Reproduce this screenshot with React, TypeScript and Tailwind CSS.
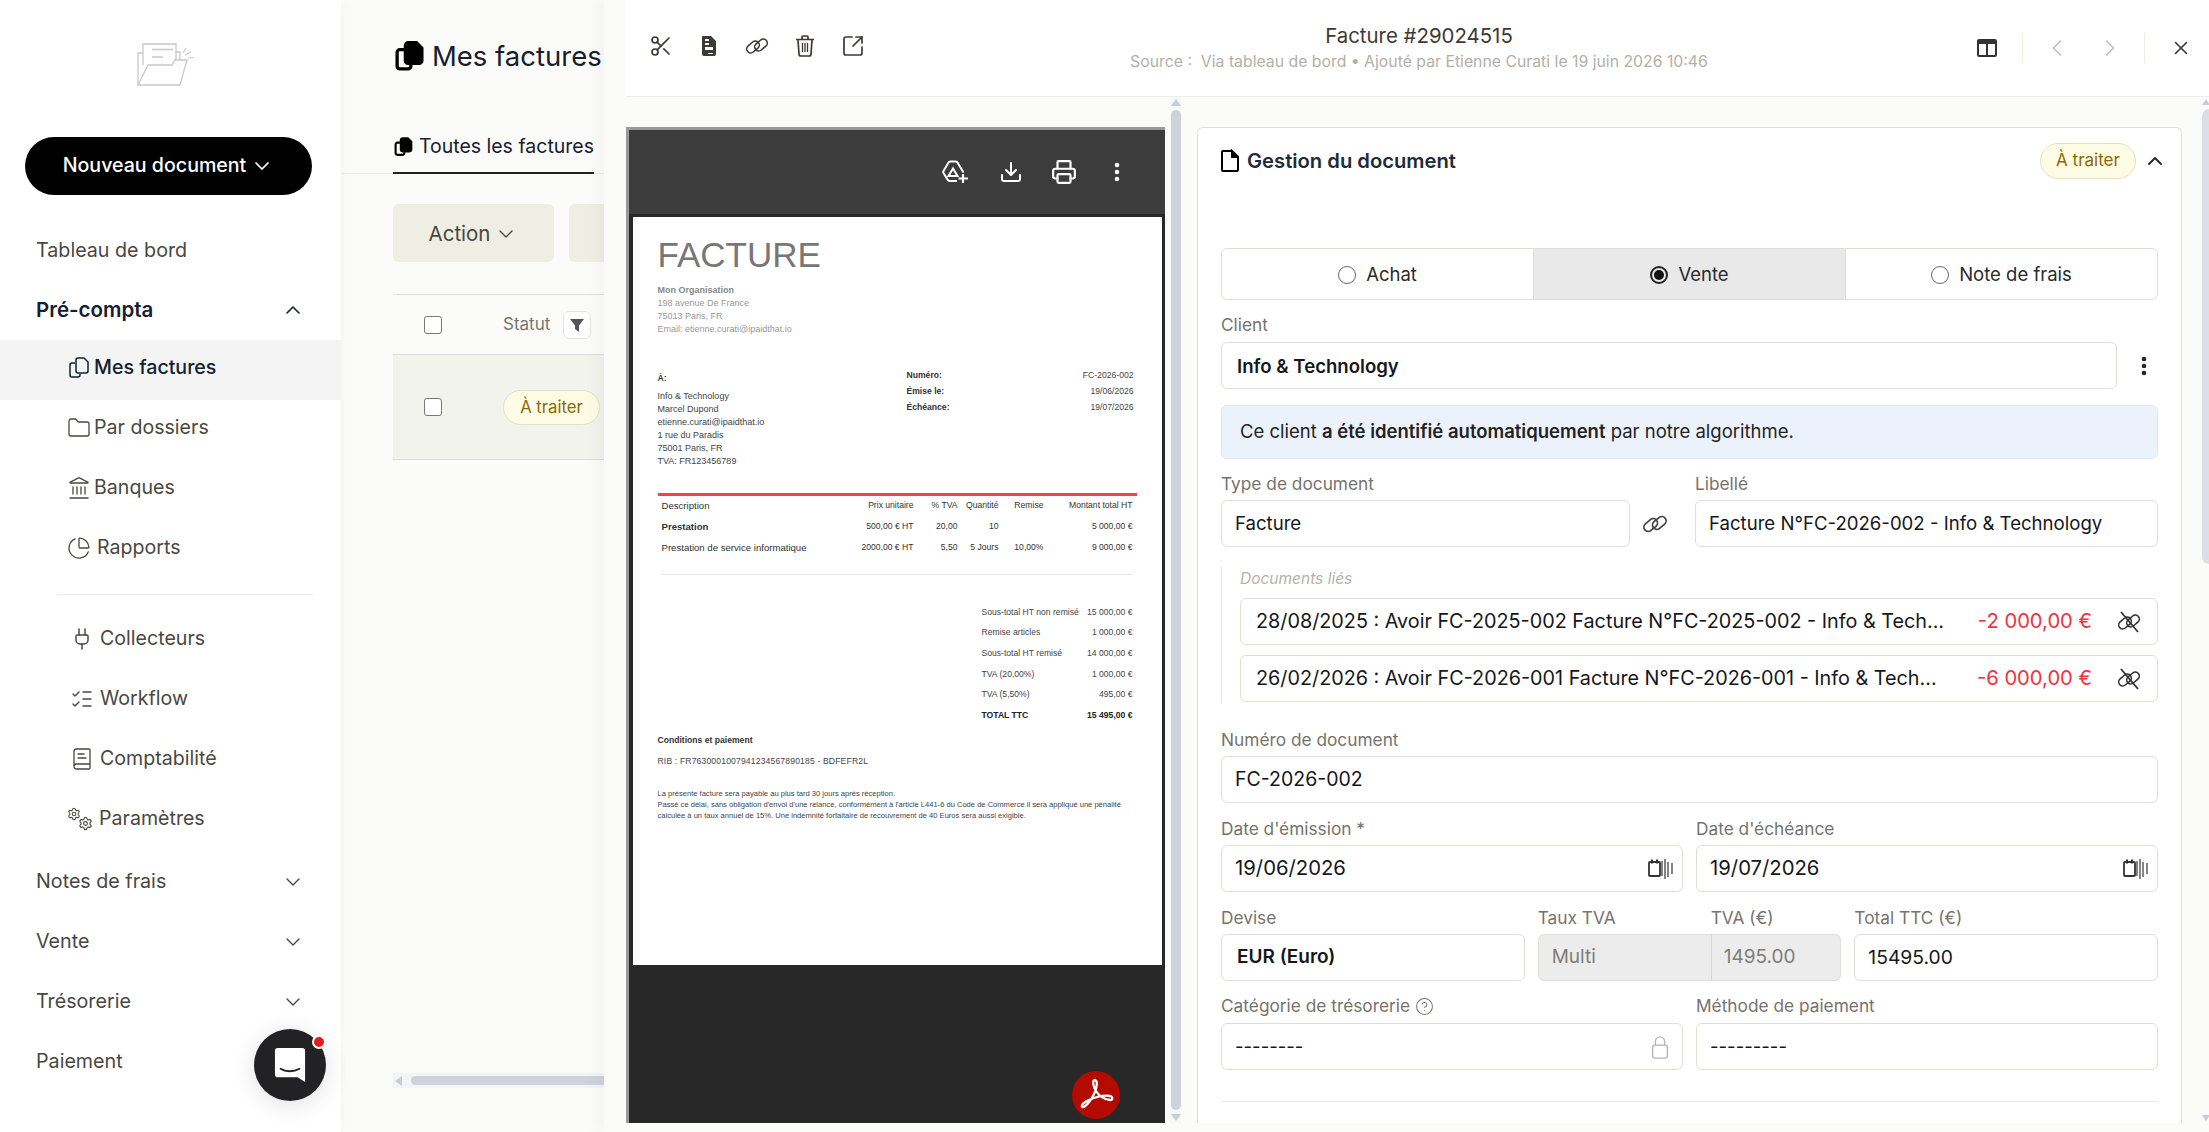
import React from "react";
import {
  BookText,
  ChartPie,
  ChevronDown,
  ChevronLeft,
  ChevronRight,
  ChevronUp,
  CircleHelp,
  Download,
  EllipsisVertical,
  Folder,
  Landmark,
  ListChecks,
  Plug,
  Printer,
  Scissors,
  Settings,
  SquareArrowOutUpRight,
  X,
} from "lucide-react";

function CopyIcon({ solid = false, className = "" }: { solid?: boolean; className?: string }) {
  return (
    <svg viewBox="0 0 24 24" fill="none" stroke="currentColor" strokeWidth={solid ? 2.4 : 1.5} className={className}>
      <path d="M8 7H5a2 2 0 0 0-2 2v10a2 2 0 0 0 2 2h6a2 2 0 0 0 2-2v-1" />
      <path
        d="M11 2h6l4 4v9a2 2 0 0 1-2 2h-8a2 2 0 0 1-2-2V4a2 2 0 0 1 2-2z"
        fill={solid ? "currentColor" : "none"}
      />
    </svg>
  );
}

function ChainIcon({ slash = false, className = "" }: { slash?: boolean; className?: string }) {
  return (
    <svg viewBox="0 0 26 26" fill="none" stroke="currentColor" strokeWidth="1.6" className={className}>
      <rect x="2" y="10" width="14" height="8" rx="4" transform="rotate(-40 9 14)" />
      <rect x="10" y="8" width="14" height="8" rx="4" transform="rotate(-40 17 12)" />
      {slash ? <path d="M5 3l17 20" strokeWidth="1.8" /> : null}
    </svg>
  );
}

function TrashIcon({ className = "" }: { className?: string }) {
  return (
    <svg viewBox="0 0 24 24" fill="none" stroke="currentColor" strokeWidth="1.7" className={className}>
      <path d="M3 5.500h18M9 5V3a1 1 0 0 1 1-1h4a1 1 0 0 1 1 1v2" />
      <path d="M5 6l1 14a2 2 0 0 0 2 2h8a2 2 0 0 0 2-2l1-14" />
      <path d="M9.500 9v9M12 9v9M14.500 9v9" strokeWidth="1.3" />
    </svg>
  );
}

function Logo() {
  return (
    <svg viewBox="0 0 90 70" fill="none" stroke="#c8c8c8" strokeWidth="1.3" className="h-[70px] w-[90px]">
      <path d="M18 55V23h5" />
      <path d="M23 35V14h33v16" />
      <path d="M32 19.500h21M32 27h11" />
      <path d="M18 55l10-20h24l3-5h12l-7 25z" fill="white" />
      <path d="M56 22h4v8" />
      <path d="M63 23l3-5M65 25l6-3M68 28l6-.5" strokeWidth="1.1" />
    </svg>
  );
}

function NavRow({ label, open, bold }: { label: string; open?: boolean; bold?: boolean }) {
  return (
    <div className={`flex h-[60px] items-center justify-between pl-9 pr-[36px] ${bold ? "text-[20.500px] font-semibold text-[#15202e]" : "pt-[2px] text-[19.700px] text-[#4a4741]"}`}>
      <span>{label}</span>
      {open === undefined ? null : open ? (
        <ChevronUp className="h-6 w-6" strokeWidth={1.6} />
      ) : (
        <ChevronDown className="h-6 w-6" strokeWidth={1.4} />
      )}
    </div>
  );
}

function SubRow({ icon, label, active, wide }: { icon: React.ReactNode; label: string; active?: boolean; wide?: boolean }) {
  return (
    <div
      className={`flex h-[60px] items-center text-[19.600px] ${wide ? "pl-[70px] gap-[6px] pt-[2px]" : "pl-[67px] gap-[3px] pb-[4px]"} ${
        active ? "bg-[#f4f4f4] text-[#15202e] font-medium" : "text-[#4a4741]"
      }`}
    >
      {icon}
      <span>{label}</span>
    </div>
  );
}

function Sidebar() {
  const ic = "h-[24px] w-[24px] shrink-0";
  return (
    <aside className="relative z-10 w-[341px] shrink-0 bg-white shadow-[2px_0_12px_rgba(0,0,0,0.03)]">
      <div className="h-[137px] pl-[120px] pt-[30px]">
        <Logo />
      </div>
      <div className="ml-[25px] flex h-[58px] w-[287px] items-center justify-center gap-1 rounded-full bg-black text-[19.600px] font-medium text-white">
        Nouveau document
        <ChevronDown className="h-6 w-6" strokeWidth={1.7} />
      </div>
      <div className="mt-[25px]">
        <NavRow label="Tableau de bord" />
        <NavRow label="Pré-compta" open bold />
        <SubRow active icon={<CopyIcon className={ic} />} label="Mes factures" />
        <SubRow icon={<Folder className={ic} strokeWidth={1.3} />} label="Par dossiers" />
        <SubRow icon={<Landmark className={ic} strokeWidth={1.3} />} label="Banques" />
        <SubRow icon={<ChartPie className={`${ic} mr-[3px]`} strokeWidth={1.3} />} label="Rapports" />
        <div className="ml-[57px] mr-[28px] mt-[14px] mb-[13px] h-px bg-[#ececec]" />
        <SubRow wide icon={<Plug className={ic} strokeWidth={1.5} />} label="Collecteurs" />
        <SubRow wide icon={<ListChecks className={ic} strokeWidth={1.4} />} label="Workflow" />
        <SubRow wide icon={<BookText className={ic} strokeWidth={1.3} />} label="Comptabilité" />
        <SubRow
          wide
          icon={
            <span className="relative -ml-[3px] block h-[24px] w-[26px]">
              <Settings className="absolute left-0 top-0 h-[14px] w-[14px]" strokeWidth={1.8} />
              <Settings className="absolute bottom-0 right-0 h-[15px] w-[15px]" strokeWidth={1.8} />
            </span>
          }
          label="Paramètres"
        />
        <div className="h-[3px]" />
        <NavRow label="Notes de frais" open={false} />
        <NavRow label="Vente" open={false} />
        <NavRow label="Trésorerie" open={false} />
        <NavRow label="Paiement" />
      </div>
    </aside>
  );
}

function ListPage() {
  return (
    <main className="flex-1 bg-[#fbfbf9] pt-[36px] pl-[52px]">
      <div className="flex items-center gap-[6px] whitespace-nowrap text-[27.500px] text-[#15202e]">
        <CopyIcon solid className="h-[33px] w-[33px] text-black" />
        Mes factures
      </div>
      <div className="mt-[46px] border-b border-[#ecece4] -ml-[52px] pl-[52px]">
        <div className="-mb-px flex h-[51px] w-[201px] items-center gap-[5px] border-b-2 border-[#222] pb-[2px] text-[19.500px] text-[#15202e]">
          <CopyIcon solid className="h-[22px] w-[22px] text-black" />
          <span className="whitespace-nowrap">Toutes les factures</span>
        </div>
      </div>
      <div className="mt-[30px] flex gap-[15px]">
        <div className="flex h-[58px] w-[161px] items-center justify-center gap-[4px] rounded-md bg-[#eeeee4] pt-[2px] text-[20.500px] text-[#4a4741]">
          Action
          <ChevronDown className="h-6 w-6" strokeWidth={1.4} />
        </div>
        <div className="h-[58px] w-[161px] rounded-md bg-[#eeeee4]" />
      </div>
      <div className="mt-[32px] flex h-[61px] items-center border-y border-[#dfdfda]">
        <span className="ml-[31px] h-[18px] w-[18px] rounded-[3px] border border-[#777] bg-white" />
        <span className="ml-[61px] text-[17px] text-[#78756e]">Statut</span>
        <span className="ml-[13px] flex h-[28px] w-[28px] items-center justify-center rounded-md border border-[#e5e5e0] bg-white">
          <svg viewBox="0 0 16 16" className="h-[16px] w-[16px] fill-[#555]">
            <path d="M1 2h14L10 8.500V15l-4-3V8.500z" />
          </svg>
        </span>
      </div>
      <div className="flex h-[105px] items-center border-b border-[#dfdfda] bg-[#f3f3ee]">
        <span className="ml-[31px] h-[18px] w-[18px] rounded-[3px] border border-[#777] bg-white" />
        <span className="ml-[61px] flex h-[35px] w-[97px] shrink-0 items-center justify-center rounded-full border border-[#e3e1c4] bg-[#fdfbe3] text-[16.700px] text-[#8a6a08]">
          À traiter
        </span>
      </div>
      <div className="mt-[613px] flex h-[15px] items-center bg-[#f3f4f6]">
        <span className="ml-[2px] h-0 w-0 border-y-[5px] border-r-[7px] border-y-transparent border-r-[#c8ccd4]" />
        <span className="ml-[9px] h-[9px] flex-1 rounded-full bg-[#cfd2da]" />
      </div>
    </main>
  );
}

function DriveAddIcon() {
  return (
    <svg viewBox="0 0 27 24" fill="none" stroke="white" strokeWidth="2" className="mr-[2px] h-[24px] w-[27px] shrink-0">
      <path d="M15 21H7.500a2 2 0 0 1-1.700-1L1.500 13a2 2 0 0 1 0-2L6.500 2.500A2 2 0 0 1 8.200 1.500h5.600a2 2 0 0 1 1.700 1l6 10" />
      <path d="M11 8.500l-4.500 7.500h9z" />
      <path d="M21 14v9M16.500 18.500h9.500" strokeWidth="2.200" />
    </svg>
  );
}

function AcrobatIcon() {
  return (
    <svg viewBox="0 0 48 48" fill="none" stroke="white" strokeWidth="2.300" className="h-[48px] w-[48px]">
      <path d="M10 36C13 37 19 30 23 21C25 15 26 10 23 9C20 9 21 15 24 20C27 25 33 29 38 29C41 29 41 26 38 25C32 24 24 26 17 29C13 31 9 33 10 36Z" />
    </svg>
  );
}

function LineRow({ desc, bold, price, tva, qty, rem, total }: { desc: string; bold?: boolean; price: string; tva: string; qty: string; rem: string; total: string }) {
  return (
    <div className="grid grid-cols-[4px_192px_60px_44px_41px_45px_89px] items-center whitespace-nowrap text-[8.600px] text-[#333]">
      <span />
      <span className={bold ? "font-bold text-[9.600px]" : "text-[9.600px]"}>{desc}</span>
      <span className="text-right">{price}</span>
      <span className="text-right">{tva}</span>
      <span className="text-right">{qty}</span>
      <span className="text-right">{rem}</span>
      <span className="text-right">{total}</span>
    </div>
  );
}

function TotalRow({ label, value, bold }: { label: string; value: string; bold?: boolean }) {
  return (
    <div className={`flex h-[20.600px] items-center justify-between ${bold ? "font-bold text-[#222]" : "text-[#444]"}`}>
      <span>{label}</span>
      <span>{value}</span>
    </div>
  );
}

function PdfPage() {
  return (
    <div className="mx-auto h-[748px] w-[529px] bg-white pl-[25px] pt-[17px] text-[8.600px] leading-[13px] text-[#444] [font-family:'Liberation_Sans',Arial,sans-serif]">
      <div className="text-[35px] leading-[42px] text-[#777]">FACTURE</div>
      <div className="mt-[8px] text-[9px] text-[#999]">
        <div className="font-bold text-[#888]">Mon Organisation</div>
        <div>198 avenue De France</div>
        <div>75013 Paris, FR</div>
        <div>Email: etienne.curati@ipaidthat.io</div>
      </div>
      <div className="mt-[36px] flex h-[101px]">
        <div className="w-[249px]">
          <div className="font-bold text-[#333]">À:</div>
          <div className="mt-[5px] text-[9px]">Info &amp; Technology</div>
          <div className="text-[9px]">Marcel Dupond</div>
          <div className="text-[9px]">etienne.curati@ipaidthat.io</div>
          <div className="text-[9px]">1 rue du Paradis</div>
          <div className="text-[9px]">75001 Paris, FR</div>
          <div className="text-[9px]">TVA: FR123456789</div>
        </div>
        <div className="-mt-[3px] flex w-[227px] flex-col gap-[3px]">
          <div className="flex justify-between"><b className="text-[#333]">Numéro:</b><span>FC-2026-002</span></div>
          <div className="flex justify-between"><b className="text-[#333]">Émise le:</b><span>19/06/2026</span></div>
          <div className="flex justify-between"><b className="text-[#333]">Échéance:</b><span>19/07/2026</span></div>
        </div>
      </div>
      <div className="mt-[20px] h-[3px] w-[479px] bg-[#ef4444]" />
      <div className="mt-[3px] flex w-[475px] flex-col gap-[8px]">
        <LineRow desc="Description" price="Prix unitaire" tva="% TVA" qty="Quantité" rem="Remise" total="Montant total HT" />
        <LineRow desc="Prestation" bold price="500,00 € HT" tva="20,00" qty="10" rem="" total="5 000,00 €" />
        <LineRow desc="Prestation de service informatique" price="2000,00 € HT" tva="5,50" qty="5 Jours" rem="10,00%" total="9 000,00 €" />
      </div>
      <div className="ml-[3px] mt-[20px] h-px w-[472px] bg-[#e8e8e8]" />
      <div className="ml-[324px] mt-[27px] w-[151px]">
        <TotalRow label="Sous-total HT non remisé" value="15 000,00 €" />
        <TotalRow label="Remise articles" value="1 000,00 €" />
        <TotalRow label="Sous-total HT remisé" value="14 000,00 €" />
        <TotalRow label="TVA (20,00%)" value="1 000,00 €" />
        <TotalRow label="TVA (5,50%)" value="495,00 €" />
        <TotalRow label="TOTAL TTC" value="15 495,00 €" bold />
      </div>
      <div className="mt-[8px] font-bold text-[#333]">Conditions et paiement</div>
      <div className="mt-[8px] tracking-[0.15px]">RIB : FR7630001007941234567890185 - BDFEFR2L</div>
      <div className="mt-[20px] whitespace-nowrap text-[7.570px] leading-[11px] text-[#444]">
        <div>La présente facture sera payable au plus tard 30 jours après réception.</div>
        <div>
          Passé ce délai, sans obligation d'envoi d'une relance, conformément à l'article L441-6 du Code de Commerce il sera appliqué une pénalité
        </div>
        <div>calculée à un taux annuel de 15%. Une indemnité forfaitaire de recouvrement de 40 Euros sera aussi exigible.</div>
      </div>
    </div>
  );
}

function PdfViewer() {
  return (
    <div className="relative w-[539px] shrink-0 overflow-hidden border-t-[3px] border-l-[3px] border-[#999] bg-[#282828]">
      <div className="flex h-[84px] items-center justify-end gap-[28px] bg-[#3c3c3c] pr-[36px] text-white">
        <DriveAddIcon />
        <Download className="h-[24px] w-[24px]" strokeWidth={2} />
        <Printer className="h-[26px] w-[26px]" strokeWidth={2} />
        <EllipsisVertical className="h-[24px] w-[24px]" strokeWidth={2.6} />
      </div>
      <div className="pt-[3px]">
        <PdfPage />
      </div>
      <div className="absolute bottom-[4px] right-[45px] h-[48px] w-[48px] rounded-full bg-[#b30b00]">
        <AcrobatIcon />
      </div>
    </div>
  );
}

function Label({ children }: { children: React.ReactNode }) {
  return <div className="flex h-[24px] items-center whitespace-nowrap text-[17.300px] text-[#76736c]">{children}</div>;
}

function Box({ children, className = "pl-[13px] text-[18.600px]" }: { children: React.ReactNode; className?: string }) {
  return (
    <div className={`mt-[4px] flex h-[47px] items-center rounded-md border border-[#dfdfd6] bg-white pr-[13px] text-[#15171a] ${className}`}>
      {children}
    </div>
  );
}

function CalendarIcon() {
  return (
    <svg viewBox="0 0 26 22" fill="none" stroke="#333" className="ml-auto -mr-[5px] h-[22px] w-[26px]">
      <rect x="1" y="4" width="11" height="14" rx="1" strokeWidth="1.800" />
      <path d="M4 1.500v4M9 1.500v4" strokeWidth="2" />
      <path d="M14 3v15M17 1v20M20 4v15M24 5v11" stroke="#777" strokeWidth="1.800" />
    </svg>
  );
}

function Radio({ label, checked }: { label: string; checked?: boolean }) {
  return (
    <div className={`flex flex-1 items-center justify-center gap-[10px] pt-[2px] text-[18.500px] text-[#2a2a2a] ${checked ? "bg-[#e9e9e9]" : ""} border-[#dfdfd6] [&+&]:border-l`}>
      <span className={`flex h-[18px] w-[18px] items-center justify-center rounded-full border ${checked ? "border-[#222] border-2" : "border-[#666]"}`}>
        {checked ? <span className="h-[10px] w-[10px] rounded-full bg-[#111]" /> : null}
      </span>
      {label}
    </div>
  );
}

function LinkedDoc({ text, amount }: { text: string; amount: string }) {
  return (
    <div className="flex h-[47px] items-center rounded-md border border-[#dfdfd6] bg-white pl-[15px] pr-[15px] text-[19.800px] text-[#15171a]">
      <span className="min-w-0 flex-1 whitespace-nowrap">{text}</span>
      <span className="ml-[14px] whitespace-nowrap text-[20.200px] text-[#ef3340]">{amount}</span>
      <ChainIcon slash className="ml-[24px] h-[26px] w-[26px] shrink-0 text-[#333]" />
    </div>
  );
}

function DocumentForm() {
  return (
    <section className="min-w-0 flex-1 overflow-hidden rounded-t-md border border-b-0 border-[#dfdfd6] bg-white px-[23px]">
      <div className="flex h-[68px] items-center pb-[2px]">
        <svg viewBox="0 0 18 24" fill="none" stroke="black" strokeWidth="2" className="h-[24px] w-[18px]">
          <path d="M2 2h9l6 6v13a1 1 0 0 1-1 1H2a1 1 0 0 1-1-1V3a1 1 0 0 1 1-1z" />
          <path d="M11 2l6 6h-6z" fill="black" />
        </svg>
        <span className="ml-[8px] text-[20.200px] font-semibold text-[#1e2b3a]">Gestion du document</span>
        <span className="ml-auto flex h-[36px] w-[96px] items-center justify-center rounded-full border border-[#e3e1c4] bg-[#fdfbe3] text-[17px] text-[#8a6a08]">
          À traiter
        </span>
        <ChevronUp className="ml-[7px] -mr-[9px] h-[24px] w-[24px] text-[#222]" strokeWidth={1.8} />
      </div>
      <div className="mt-[52px] flex h-[52px] overflow-hidden rounded-md border border-[#dfdfd6]">
        <Radio label="Achat" />
        <Radio label="Vente" checked />
        <Radio label="Note de frais" />
      </div>
      <div className="mt-[13px]">
        <Label>Client</Label>
        <div className="mt-px flex items-center">
          <Box className="flex-1 pl-[15px] pt-[3px] text-[18.600px] font-semibold">Info &amp; Technology</Box>
          <EllipsisVertical className="ml-[15px] mr-[2px] mt-[4px] h-[24px] w-[24px] text-[#222]" strokeWidth={2.6} />
        </div>
      </div>
      <div className="mt-[16px] flex h-[54px] items-center rounded-md border border-[#dde8f6] bg-[#ebf2fb] px-[18px] text-[18.500px] text-[#222]">
        <span>
          Ce client <b className="font-semibold">a été identifié automatiquement</b> par notre algorithme.
        </span>
      </div>
      <div className="mt-[13px] grid grid-cols-[409px_65px_1fr]">
        <div>
          <Label>Type de document</Label>
          <Box>Facture</Box>
        </div>
        <div className="flex items-end pb-[9px] pl-[11px]">
          <ChainIcon className="h-[28px] w-[28px] text-[#444]" />
        </div>
        <div>
          <Label>Libellé</Label>
          <Box>Facture N°FC-2026-002 - Info &amp; Technology</Box>
        </div>
      </div>
      <div className="mt-[19px] h-[137px] border-l border-[#e5e5dc] pl-[18px]">
        <div className="flex h-[29px] items-center pb-[3px] text-[15.500px] italic text-[#b5b2aa]">Documents liés</div>
        <div className="mt-[3px] flex flex-col gap-[10px]">
          <LinkedDoc text="28/08/2025 : Avoir FC-2025-002 Facture N°FC-2025-002 - Info & Tech..." amount="-2 000,00 €" />
          <LinkedDoc text="26/02/2026 : Avoir FC-2026-001 Facture N°FC-2026-001 - Info & Tech..." amount="-6 000,00 €" />
        </div>
      </div>
      <div className="mt-[25px]">
        <Label>Numéro de document</Label>
        <Box className="pl-[13px] text-[19.500px]">FC-2026-002</Box>
      </div>
      <div className="mt-[14px] grid grid-cols-2 gap-x-[13px]">
        <div>
          <Label>Date d'émission *</Label>
          <Box className="pl-[13px] text-[20.300px]">
            19/06/2026
            <CalendarIcon />
          </Box>
        </div>
        <div>
          <Label>Date d'échéance</Label>
          <Box className="pl-[13px] text-[20.300px]">
            19/07/2026
            <CalendarIcon />
          </Box>
        </div>
      </div>
      <div className="mt-[14px] grid grid-cols-3 gap-x-[13px]">
        <div>
          <Label>Devise</Label>
          <Box className="border-[#ccc] pl-[15px] text-[19px] font-semibold">EUR (Euro)</Box>
        </div>
        <div>
          <div className="grid grid-cols-[173px_1fr]">
            <Label>Taux TVA</Label>
            <Label>TVA (€)</Label>
          </div>
          <div className="mt-[4px] grid h-[47px] grid-cols-[173px_1fr] rounded-md border border-[#dfdfd6] bg-[#ececec] text-[19px] text-[#807d77]">
            <span className="flex items-center border-r border-[#d5d5d0] pl-[13px]">Multi</span>
            <span className="flex items-center pl-[12px]">1495.00</span>
          </div>
        </div>
        <div>
          <Label>Total TTC (€)</Label>
          <Box className="bg-[#ececec] pl-[13px] text-[19.300px]">15495.00</Box>
        </div>
      </div>
      <div className="mt-[13px] grid grid-cols-2 gap-x-[13px]">
        <div>
          <Label>
            Catégorie de trésorerie
            <CircleHelp className="ml-[5px] h-[19px] w-[19px]" strokeWidth={1.3} />
          </Label>
          <Box className="mt-[5px] pl-[13px] text-[18.600px]">
            --------
            <svg viewBox="0 0 20 26" fill="none" stroke="#b5b5b5" strokeWidth="1.500" className="ml-auto -mr-px h-[24px] w-[20px]">
              <rect x="2" y="11" width="16" height="14" rx="2.500" />
              <path d="M5 11V7a5 5 0 0 1 10 0v4" />
            </svg>
          </Box>
        </div>
        <div>
          <Label>Méthode de paiement</Label>
          <Box className="mt-[5px] pl-[13px] text-[18.600px]">---------</Box>
        </div>
      </div>
      <div className="mt-[31px] h-px bg-[#ececec]" />
    </section>
  );
}

function DetailPanel() {
  const ic = "h-[24px] w-[24px]";
  const cell = "flex w-[48px] justify-center";
  return (
    <div className="absolute inset-y-0 left-[604px] right-0 z-20 flex flex-col bg-[#fbfbf9] pl-[22px] shadow-[-8px_0_14px_rgba(0,0,0,0.03)]">
      <header className="flex h-[97px] shrink-0 items-center border-b border-[#eeeee8] bg-white pr-[17px]">
        <div className="flex w-[320px] items-center pb-[4px] pl-[11px] text-[#3d3a34]">
          <span className={cell}><Scissors className={ic} strokeWidth={1.7} /></span>
          <span className={cell}>
            <svg viewBox="0 0 24 24" className={ic} fill="currentColor">
              <path fillRule="evenodd" d="M6 2h8l5 5v13a2 2 0 0 1-2 2H7a2 2 0 0 1-2-2V3a1 1 0 0 1 1-1zm2 3v2h4V5zm0 4v2h4V9zm0 4v3h8v-3zm3 6v1h5v-1z" />
            </svg>
          </span>
          <span className={cell}><ChainIcon className="h-[26px] w-[26px]" /></span>
          <span className={cell}><TrashIcon className={ic} /></span>
          <span className={cell}><SquareArrowOutUpRight className={ic} strokeWidth={1.7} /></span>
        </div>
        <div className="min-w-0 flex-1 text-center">
          <div className="text-[20.400px] leading-[28px] text-[#3d3a34]">Facture #29024515</div>
          <div className="whitespace-nowrap text-[15.800px] leading-[24px] text-[#b3b0a9]">
            Source : &nbsp;Via tableau de bord • Ajouté par Etienne Curati le 19 juin 2026 10:46
          </div>
        </div>
        <div className="flex w-[300px] items-center justify-end text-[#333]">
          <svg viewBox="0 0 24 24" fill="none" stroke="currentColor" strokeWidth="2" className="h-[24px] w-[24px]">
            <rect x="3" y="4" width="18" height="16" rx="1" />
            <path d="M3 6h18" strokeWidth="4" />
            <path d="M12 6v14" />
          </svg>
          <span className="ml-[23px] mr-[20px] h-[30px] w-px bg-[#eeeee8]" />
          <ChevronLeft className="h-[28px] w-[28px] text-[#bdbdbd]" strokeWidth={1.3} />
          <ChevronRight className="ml-[25px] h-[28px] w-[28px] text-[#bdbdbd]" strokeWidth={1.3} />
          <span className="ml-[20px] mr-[25px] h-[30px] w-px bg-[#eeeee8]" />
          <X className="h-[22px] w-[22px]" strokeWidth={1.7} />
        </div>
      </header>
      <div className="flex min-h-0 flex-1 pb-[9px]">
        <div className="flex pt-[30px]">
          <PdfViewer />
        </div>
        <div className="ml-[5px] flex w-[11px] shrink-0 flex-col items-center bg-[#f7f7f7]">
          <span className="mt-[2px] h-0 w-0 border-x-[5px] border-b-[7px] border-x-transparent border-b-[#c8ccd4]" />
          <span className="mt-[4px] w-[10px] flex-1 rounded-full bg-[#cfd2da]" />
          <span className="mb-[2px] mt-[4px] h-0 w-0 border-x-[5px] border-t-[7px] border-x-transparent border-t-[#c8ccd4]" />
        </div>
        <div className="flex min-w-0 flex-1 pl-[16px] pt-[30px]">
          <DocumentForm />
        </div>
        <div className="ml-[20px] flex w-[7px] shrink-0 flex-col items-center">
          <span className="mt-[2px] h-0 w-0 border-x-[4px] border-b-[6px] border-x-transparent border-b-[#c8ccd4]" />
          <span className="mt-[4px] h-[455px] w-[7px] rounded-l-full bg-[#dcdee3]" />
          <span className="mb-[2px] mt-auto h-0 w-0 border-x-[4px] border-t-[6px] border-x-transparent border-t-[#c8ccd4]" />
        </div>
      </div>
    </div>
  );
}

function ChatBubble() {
  return (
    <div className="absolute left-[254px] top-[1029px] z-30 flex h-[72px] w-[72px] items-center justify-center rounded-full bg-[#222224] shadow-[0_4px_24px_rgba(0,0,0,0.12)]">
      <svg viewBox="0 0 34 38" className="h-[36px] w-[32px]">
        <path d="M4 1h26a3 3 0 0 1 3 3v33l-8-5H4a3 3 0 0 1-3-3V4a3 3 0 0 1 3-3z" fill="white" />
        <path d="M7 23c5 3.500 14 3.500 20 0" fill="none" stroke="#222224" strokeWidth="2" strokeLinecap="round" />
      </svg>
      <span className="absolute right-0 top-[6px] h-[14px] w-[14px] rounded-full border-2 border-white bg-[#e21b1b]" />
    </div>
  );
}

export default function App() {
  return (
    <div className="relative flex h-screen w-full overflow-hidden bg-white [font-family:Inter,sans-serif]">
      <Sidebar />
      <ListPage />
      <DetailPanel />
      <ChatBubble />
    </div>
  );
}
